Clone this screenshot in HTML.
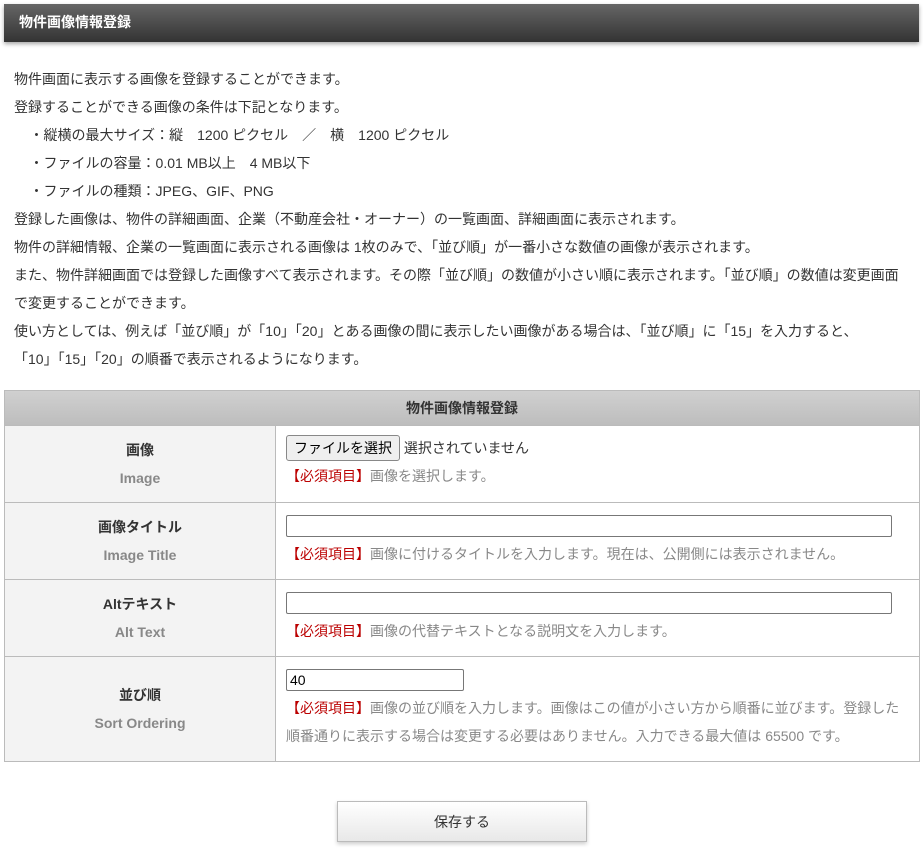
<!DOCTYPE html>
<html><head><meta charset="utf-8"><style>
*{box-sizing:border-box;margin:0;padding:0}
body{width:923px;height:856px;background:#fff;font-family:"Liberation Sans","Noto Sans CJK JP",sans-serif;font-size:14px;color:#333;position:relative;overflow:hidden}
.hd{position:absolute;left:4px;top:4px;width:915px;height:38px;background:linear-gradient(#666,#333);box-shadow:0 2px 4px rgba(0,0,0,.35);color:#fff;font-weight:bold;font-size:14px;line-height:36px;padding-left:15px}
.intro{position:absolute;left:14px;top:65px;line-height:28px;font-size:14px;color:#333}
.tb{position:absolute;left:4px;top:390px;width:916px;border:1px solid #bbb;border-collapse:collapse}
.th{height:34px;background:linear-gradient(#d0d0d0,#bdbdbd);text-align:center;font-weight:bold;line-height:34px;color:#333}
.row{display:flex;border-top:1px solid #bbb}
.l{width:271px;background:#f3f3f3;border-right:1px solid #bbb;text-align:center;display:flex;flex-direction:column;justify-content:center;line-height:28px}
.l b{color:#333}.l span{color:#888;font-weight:bold}
.r{flex:1;padding:8px 10px;line-height:28px;color:#888}
.req{color:#b00}
.inp{display:block;height:22px;border:1px solid #777;border-radius:2px;margin:3px 0 3px 0;font-size:14px;padding-left:3px;line-height:20px;color:#000}
.fb{display:inline-block;height:26px;border:1px solid #888;border-radius:3px;background:#efefef;padding:0 7px;line-height:24px;color:#000;font-size:14px}
.btn{position:absolute;left:337px;top:801px;width:250px;height:41px;border:1px solid #bbb;background:linear-gradient(#fff,#e8e8e8);box-shadow:0 2px 4px rgba(0,0,0,.2);text-align:center;line-height:40px;font-size:14px;color:#333}
</style></head><body>
<div class="hd">物件画像情報登録</div>
<div class="intro">
物件画面に表示する画像を登録することができます。<br>
登録することができる画像の条件は下記となります。<br>
&nbsp;&nbsp;&nbsp;&nbsp;・縦横の最大サイズ：縦　1200 ピクセル　／　横　1200 ピクセル<br>
&nbsp;&nbsp;&nbsp;&nbsp;・ファイルの容量：0.01 MB以上　4 MB以下<br>
&nbsp;&nbsp;&nbsp;&nbsp;・ファイルの種類：JPEG、GIF、PNG<br>
登録した画像は、物件の詳細画面、企業（不動産会社・オーナー）の一覧画面、詳細画面に表示されます。<br>
物件の詳細情報、企業の一覧画面に表示される画像は 1枚のみで、「並び順」が一番小さな数値の画像が表示されます。<br>
また、物件詳細画面では登録した画像すべて表示されます。その際「並び順」の数値が小さい順に表示されます。「並び順」の数値は変更画面<br>
で変更することができます。<br>
使い方としては、例えば「並び順」が「10」「20」とある画像の間に表示したい画像がある場合は、「並び順」に「15」を入力すると、<br>
「10」「15」「20」の順番で表示されるようになります。
</div>
<div class="tb">
<div class="th">物件画像情報登録</div>
<div class="row" style="height:77px"><div class="l"><b>画像</b><span>Image</span></div>
<div class="r"><span class="fb">ファイルを選択</span> <span style="color:#333">選択されていません</span><br><span class="req">【必須項目】</span>画像を選択します。</div></div>
<div class="row" style="height:77px"><div class="l"><b>画像タイトル</b><span>Image Title</span></div>
<div class="r"><div class="inp" style="width:606px;margin-top:4px"></div><span class="req">【必須項目】</span>画像に付けるタイトルを入力します。現在は、公開側には表示されません。</div></div>
<div class="row" style="height:77px"><div class="l"><b>Altテキスト</b><span>Alt Text</span></div>
<div class="r"><div class="inp" style="width:606px;margin-top:4px"></div><span class="req">【必須項目】</span>画像の代替テキストとなる説明文を入力します。</div></div>
<div class="row" style="height:105px"><div class="l"><b>並び順</b><span>Sort Ordering</span></div>
<div class="r"><div class="inp" style="width:178px;margin-top:4px">40</div><span class="req">【必須項目】</span>画像の並び順を入力します。画像はこの値が小さい方から順番に並びます。登録した<br>順番通りに表示する場合は変更する必要はありません。入力できる最大値は 65500 です。</div></div>
</div>
<div class="btn">保存する</div>
</body></html>
